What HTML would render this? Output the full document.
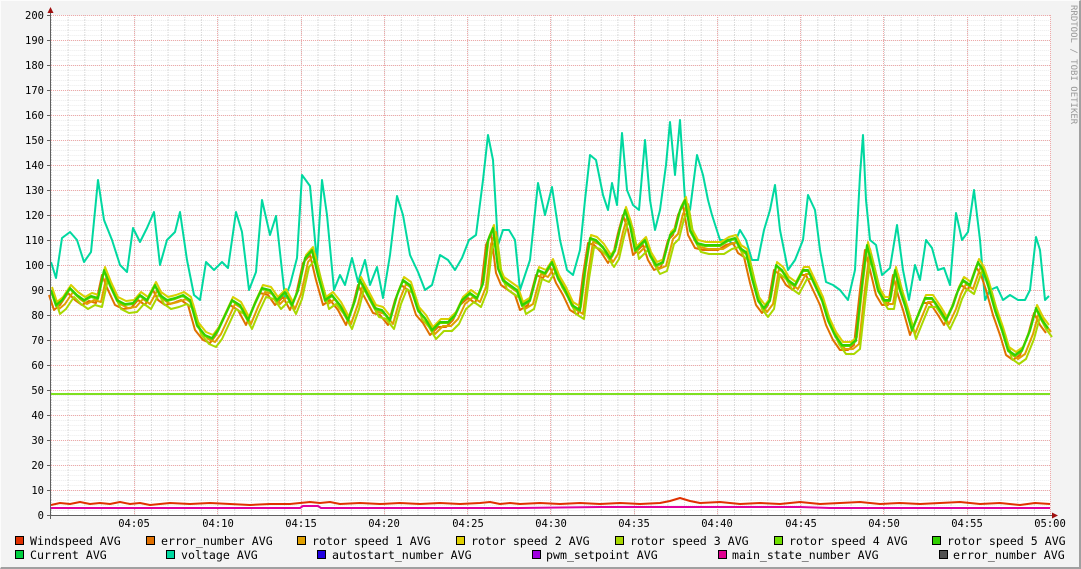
<!DOCTYPE html>
<html><head><meta charset="utf-8">
<style>
html,body{margin:0;padding:0;}
body{width:1081px;height:569px;background:#f3f3f3;overflow:hidden;position:relative;font-family:"DejaVu Sans Mono","Liberation Mono",monospace;}
.frame{position:absolute;left:0;top:0;width:1079px;height:567px;border-top:1px solid #fcfcfc;border-left:1px solid #fcfcfc;border-right:2px solid #a0a0a0;border-bottom:2px solid #a0a0a0;box-sizing:border-box;width:1081px;height:569px;}
svg{position:absolute;left:0;top:0;}
</style></head><body>
<div class="frame"></div>
<svg width="1081" height="569" xmlns="http://www.w3.org/2000/svg">
<defs>
<pattern id="minor" x="51" y="15" width="16.66" height="5" patternUnits="userSpaceOnUse">
<line x1="0" y1="0" x2="16.66" y2="0" stroke="#d8d8d8" stroke-width="1" stroke-dasharray="1,1"/>
<line x1="0.5" y1="0" x2="0.5" y2="5" stroke="#d8d8d8" stroke-width="1" stroke-dasharray="1,1"/>
</pattern>
</defs>
<rect x="51" y="15" width="999" height="500" fill="#fff"/>
<rect x="51" y="15" width="999" height="500" fill="url(#minor)"/>
<g stroke="#f0a8a8" stroke-width="1" stroke-dasharray="1,1">
<line x1="51" y1="15.5" x2="1050" y2="15.5"/><line x1="51" y1="40.5" x2="1050" y2="40.5"/><line x1="51" y1="65.5" x2="1050" y2="65.5"/><line x1="51" y1="90.5" x2="1050" y2="90.5"/><line x1="51" y1="115.5" x2="1050" y2="115.5"/><line x1="51" y1="140.5" x2="1050" y2="140.5"/><line x1="51" y1="165.5" x2="1050" y2="165.5"/><line x1="51" y1="190.5" x2="1050" y2="190.5"/><line x1="51" y1="215.5" x2="1050" y2="215.5"/><line x1="51" y1="240.5" x2="1050" y2="240.5"/><line x1="51" y1="265.5" x2="1050" y2="265.5"/><line x1="51" y1="290.5" x2="1050" y2="290.5"/><line x1="51" y1="315.5" x2="1050" y2="315.5"/><line x1="51" y1="340.5" x2="1050" y2="340.5"/><line x1="51" y1="365.5" x2="1050" y2="365.5"/><line x1="51" y1="390.5" x2="1050" y2="390.5"/><line x1="51" y1="415.5" x2="1050" y2="415.5"/><line x1="51" y1="440.5" x2="1050" y2="440.5"/><line x1="51" y1="465.5" x2="1050" y2="465.5"/><line x1="51" y1="490.5" x2="1050" y2="490.5"/>
<line x1="134.5" y1="15" x2="134.5" y2="515"/><line x1="217.5" y1="15" x2="217.5" y2="515"/><line x1="301.5" y1="15" x2="301.5" y2="515"/><line x1="384.5" y1="15" x2="384.5" y2="515"/><line x1="467.5" y1="15" x2="467.5" y2="515"/><line x1="550.5" y1="15" x2="550.5" y2="515"/><line x1="634.5" y1="15" x2="634.5" y2="515"/><line x1="717.5" y1="15" x2="717.5" y2="515"/><line x1="800.5" y1="15" x2="800.5" y2="515"/><line x1="883.5" y1="15" x2="883.5" y2="515"/><line x1="967.5" y1="15" x2="967.5" y2="515"/><line x1="1050.5" y1="15" x2="1050.5" y2="515"/>
</g>
<g fill="none" stroke-width="2" stroke-linejoin="round">
<polyline stroke="#80e020" points="51,394 1050,394"/>
<polyline stroke="#e000a0" points="51,508 300,508 303,506 318,506 321,508 330,508 520,508 600,507 800,507 830,508 1050,508"/>
<polyline stroke="#e03000" points="51,505 60,503 70,504 80,502 90,504 100,503 110,504 120,502 130,504 140,503 150,505 170,503 190,504 210,503 230,504 250,505 270,504 290,504 300,503 310,502 320,503 330,502 340,504 360,503 380,504 400,503 420,504 440,503 460,504 480,503 490,502 500,504 510,503 520,504 540,503 560,504 580,503 600,504 620,503 640,504 660,503 670,501 680,498 690,501 700,503 720,502 740,504 760,503 780,504 800,502 820,504 840,503 860,502 880,504 900,503 920,504 940,503 960,502 980,504 1000,503 1020,505 1035,503 1050,504"/>
<polyline stroke="#00d8a0" points="51,262 56,278 62,238 70,232 77,240 84,262 91,252 98,180 104,220 112,240 120,265 127,272 133,228 140,242 147,228 154,212 160,265 167,240 175,232 180,212 187,260 194,295 200,300 206,262 214,270 222,262 228,268 236,212 242,232 249,290 256,272 262,200 270,235 276,216 285,298 290,285 297,258 302,175 310,186 317,262 322,180 327,215 334,290 340,275 345,285 352,258 358,282 365,260 370,285 377,267 383,298 390,255 397,196 403,215 410,255 418,272 425,290 432,285 440,255 448,260 455,270 462,258 469,240 476,235 483,180 488,135 493,160 498,245 503,230 509,230 515,240 520,290 530,260 538,183 545,215 552,187 560,240 567,270 573,275 580,250 585,200 590,155 596,160 603,195 608,210 612,183 617,205 622,133 627,190 633,205 639,210 645,140 650,200 655,230 660,210 666,165 670,122 675,175 680,120 685,200 690,210 697,155 703,175 708,200 712,215 720,240 728,240 734,245 740,230 746,240 752,260 758,260 764,230 770,210 775,185 780,230 788,270 795,260 803,240 808,195 815,210 820,250 826,282 833,285 840,290 848,300 855,270 860,175 863,135 866,200 870,240 876,245 882,275 890,268 897,225 903,270 909,300 915,265 920,280 926,240 932,248 938,270 944,268 950,285 956,213 962,240 968,232 974,190 980,240 985,300 990,290 997,287 1003,300 1010,295 1018,300 1025,300 1030,290 1036,237 1040,250 1045,300 1049,296"/>
<g id="rot">
<polyline stroke="#e07000" transform="translate(-2,5)" points="51,290 56,305 62,300 70,288 77,295 84,300 91,296 98,298 104,270 110,285 117,300 125,304 133,303 140,295 147,300 155,285 160,295 167,300 175,298 183,295 190,300 197,325 205,335 212,338 218,330 225,315 232,300 240,305 248,320 255,303 262,288 270,290 277,300 285,292 292,305 298,290 305,258 312,250 318,275 325,300 332,295 340,305 348,320 355,300 360,280 368,295 375,308 382,310 390,320 397,295 403,280 410,285 418,310 425,318 432,330 440,322 448,322 455,315 462,300 470,293 477,298 483,283 488,240 493,228 498,268 503,280 510,285 517,290 522,305 530,300 538,270 545,273 552,262 558,278 565,290 572,305 580,310 585,270 590,238 596,240 603,247 610,258 615,250 620,228 625,210 630,225 635,250 640,245 645,240 650,255 656,265 663,262 670,235 675,230 680,210 685,200 690,230 697,243 705,245 712,245 720,245 728,240 735,238 740,248 746,252 752,278 758,300 764,308 770,300 776,265 782,270 788,280 795,285 803,270 808,270 815,285 822,300 828,320 835,335 842,345 850,345 856,340 862,285 867,245 872,265 878,290 884,300 890,300 895,270 900,290 905,305 912,330 918,315 925,298 932,298 940,310 946,320 953,305 958,290 963,280 970,285 978,262 983,270 988,285 995,310 1002,330 1008,350 1015,355 1022,350 1030,330 1036,308 1042,320 1048,328"/>
</g>
<polyline stroke="#e0a000" transform="translate(3,4)" points="51,290 56,305 62,300 70,288 77,295 84,300 91,296 98,298 104,270 110,285 117,300 125,304 133,303 140,295 147,300 155,285 160,295 167,300 175,298 183,295 190,300 197,325 205,335 212,338 218,330 225,315 232,300 240,305 248,320 255,303 262,288 270,290 277,300 285,292 292,305 298,290 305,258 312,250 318,275 325,300 332,295 340,305 348,320 355,300 360,280 368,295 375,308 382,310 390,320 397,295 403,280 410,285 418,310 425,318 432,330 440,322 448,322 455,315 462,300 470,293 477,298 483,283 488,240 493,228 498,268 503,280 510,285 517,290 522,305 530,300 538,270 545,273 552,262 558,278 565,290 572,305 580,310 585,270 590,238 596,240 603,247 610,258 615,250 620,228 625,210 630,225 635,250 640,245 645,240 650,255 656,265 663,262 670,235 675,230 680,210 685,200 690,230 697,243 705,245 712,245 720,245 728,240 735,238 740,248 746,252 752,278 758,300 764,308 770,300 776,265 782,270 788,280 795,285 803,270 808,270 815,285 822,300 828,320 835,335 842,345 850,345 856,340 862,285 867,245 872,265 878,290 884,300 890,300 895,270 900,290 905,305 912,330 918,315 925,298 932,298 940,310 946,320 953,305 958,290 963,280 970,285 978,262 983,270 988,285 995,310 1002,330 1008,350 1015,355 1022,350 1030,330 1036,308 1042,320 1048,328"/>
<polyline stroke="#d8d000" transform="translate(1,-3)" points="51,290 56,305 62,300 70,288 77,295 84,300 91,296 98,298 104,270 110,285 117,300 125,304 133,303 140,295 147,300 155,285 160,295 167,300 175,298 183,295 190,300 197,325 205,335 212,338 218,330 225,315 232,300 240,305 248,320 255,303 262,288 270,290 277,300 285,292 292,305 298,290 305,258 312,250 318,275 325,300 332,295 340,305 348,320 355,300 360,280 368,295 375,308 382,310 390,320 397,295 403,280 410,285 418,310 425,318 432,330 440,322 448,322 455,315 462,300 470,293 477,298 483,283 488,240 493,228 498,268 503,280 510,285 517,290 522,305 530,300 538,270 545,273 552,262 558,278 565,290 572,305 580,310 585,270 590,238 596,240 603,247 610,258 615,250 620,228 625,210 630,225 635,250 640,245 645,240 650,255 656,265 663,262 670,235 675,230 680,210 685,200 690,230 697,243 705,245 712,245 720,245 728,240 735,238 740,248 746,252 752,278 758,300 764,308 770,300 776,265 782,270 788,280 795,285 803,270 808,270 815,285 822,300 828,320 835,335 842,345 850,345 856,340 862,285 867,245 872,265 878,290 884,300 890,300 895,270 900,290 905,305 912,330 918,315 925,298 932,298 940,310 946,320 953,305 958,290 963,280 970,285 978,262 983,270 988,285 995,310 1002,330 1008,350 1015,355 1022,350 1030,330 1036,308 1042,320 1048,328"/>
<polyline stroke="#a8d800" transform="translate(4,9)" points="51,290 56,305 62,300 70,288 77,295 84,300 91,296 98,298 104,270 110,285 117,300 125,304 133,303 140,295 147,300 155,285 160,295 167,300 175,298 183,295 190,300 197,325 205,335 212,338 218,330 225,315 232,300 240,305 248,320 255,303 262,288 270,290 277,300 285,292 292,305 298,290 305,258 312,250 318,275 325,300 332,295 340,305 348,320 355,300 360,280 368,295 375,308 382,310 390,320 397,295 403,280 410,285 418,310 425,318 432,330 440,322 448,322 455,315 462,300 470,293 477,298 483,283 488,240 493,228 498,268 503,280 510,285 517,290 522,305 530,300 538,270 545,273 552,262 558,278 565,290 572,305 580,310 585,270 590,238 596,240 603,247 610,258 615,250 620,228 625,210 630,225 635,250 640,245 645,240 650,255 656,265 663,262 670,235 675,230 680,210 685,200 690,230 697,243 705,245 712,245 720,245 728,240 735,238 740,248 746,252 752,278 758,300 764,308 770,300 776,265 782,270 788,280 795,285 803,270 808,270 815,285 822,300 828,320 835,335 842,345 850,345 856,340 862,285 867,245 872,265 878,290 884,300 890,300 895,270 900,290 905,305 912,330 918,315 925,298 932,298 940,310 946,320 953,305 958,290 963,280 970,285 978,262 983,270 988,285 995,310 1002,330 1008,350 1015,355 1022,350 1030,330 1036,308 1042,320 1048,328"/>
<polyline stroke="#60d800" transform="translate(0,1)" points="51,290 56,305 62,300 70,288 77,295 84,300 91,296 98,298 104,270 110,285 117,300 125,304 133,303 140,295 147,300 155,285 160,295 167,300 175,298 183,295 190,300 197,325 205,335 212,338 218,330 225,315 232,300 240,305 248,320 255,303 262,288 270,290 277,300 285,292 292,305 298,290 305,258 312,250 318,275 325,300 332,295 340,305 348,320 355,300 360,280 368,295 375,308 382,310 390,320 397,295 403,280 410,285 418,310 425,318 432,330 440,322 448,322 455,315 462,300 470,293 477,298 483,283 488,240 493,228 498,268 503,280 510,285 517,290 522,305 530,300 538,270 545,273 552,262 558,278 565,290 572,305 580,310 585,270 590,238 596,240 603,247 610,258 615,250 620,228 625,210 630,225 635,250 640,245 645,240 650,255 656,265 663,262 670,235 675,230 680,210 685,200 690,230 697,243 705,245 712,245 720,245 728,240 735,238 740,248 746,252 752,278 758,300 764,308 770,300 776,265 782,270 788,280 795,285 803,270 808,270 815,285 822,300 828,320 835,335 842,345 850,345 856,340 862,285 867,245 872,265 878,290 884,300 890,300 895,270 900,290 905,305 912,330 918,315 925,298 932,298 940,310 946,320 953,305 958,290 963,280 970,285 978,262 983,270 988,285 995,310 1002,330 1008,350 1015,355 1022,350 1030,330 1036,308 1042,320 1048,328"/>
<polyline stroke="#30d000" points="51,290 56,305 62,300 70,288 77,295 84,300 91,296 98,298 104,270 110,285 117,300 125,304 133,303 140,295 147,300 155,285 160,295 167,300 175,298 183,295 190,300 197,325 205,335 212,338 218,330 225,315 232,300 240,305 248,320 255,303 262,288 270,290 277,300 285,292 292,305 298,290 305,258 312,250 318,275 325,300 332,295 340,305 348,320 355,300 360,280 368,295 375,308 382,310 390,320 397,295 403,280 410,285 418,310 425,318 432,330 440,322 448,322 455,315 462,300 470,293 477,298 483,283 488,240 493,228 498,268 503,280 510,285 517,290 522,305 530,300 538,270 545,273 552,262 558,278 565,290 572,305 580,310 585,270 590,238 596,240 603,247 610,258 615,250 620,228 625,210 630,225 635,250 640,245 645,240 650,255 656,265 663,262 670,235 675,230 680,210 685,200 690,230 697,243 705,245 712,245 720,245 728,240 735,238 740,248 746,252 752,278 758,300 764,308 770,300 776,265 782,270 788,280 795,285 803,270 808,270 815,285 822,300 828,320 835,335 842,345 850,345 856,340 862,285 867,245 872,265 878,290 884,300 890,300 895,270 900,290 905,305 912,330 918,315 925,298 932,298 940,310 946,320 953,305 958,290 963,280 970,285 978,262 983,270 988,285 995,310 1002,330 1008,350 1015,355 1022,350 1030,330 1036,308 1042,320 1048,328"/>
</g>
<!-- axes -->
<line x1="50.5" y1="12" x2="50.5" y2="519" stroke="#606060" stroke-width="1"/>
<line x1="47" y1="515.5" x2="1054" y2="515.5" stroke="#606060" stroke-width="1"/>
<polygon points="47.5,13 53.5,13 50.5,7" fill="#a01010"/>
<polygon points="1052,512.5 1052,518.5 1058,515.5" fill="#a01010"/>
<g stroke="#606060" stroke-width="1">
<line x1="47" y1="15.5" x2="50" y2="15.5"/><line x1="47" y1="40.5" x2="50" y2="40.5"/><line x1="47" y1="65.5" x2="50" y2="65.5"/><line x1="47" y1="90.5" x2="50" y2="90.5"/><line x1="47" y1="115.5" x2="50" y2="115.5"/><line x1="47" y1="140.5" x2="50" y2="140.5"/><line x1="47" y1="165.5" x2="50" y2="165.5"/><line x1="47" y1="190.5" x2="50" y2="190.5"/><line x1="47" y1="215.5" x2="50" y2="215.5"/><line x1="47" y1="240.5" x2="50" y2="240.5"/><line x1="47" y1="265.5" x2="50" y2="265.5"/><line x1="47" y1="290.5" x2="50" y2="290.5"/><line x1="47" y1="315.5" x2="50" y2="315.5"/><line x1="47" y1="340.5" x2="50" y2="340.5"/><line x1="47" y1="365.5" x2="50" y2="365.5"/><line x1="47" y1="390.5" x2="50" y2="390.5"/><line x1="47" y1="415.5" x2="50" y2="415.5"/><line x1="47" y1="440.5" x2="50" y2="440.5"/><line x1="47" y1="465.5" x2="50" y2="465.5"/><line x1="47" y1="490.5" x2="50" y2="490.5"/>
</g>
<g font-family="DejaVu Sans Mono, Liberation Mono, monospace" font-size="10.5" fill="#000" text-anchor="end">
<text x="44" y="19">200</text><text x="44" y="44">190</text><text x="44" y="69">180</text><text x="44" y="94">170</text><text x="44" y="119">160</text><text x="44" y="144">150</text><text x="44" y="169">140</text><text x="44" y="194">130</text><text x="44" y="219">120</text><text x="44" y="244">110</text><text x="44" y="269">100</text><text x="44" y="294">90</text><text x="44" y="319">80</text><text x="44" y="344">70</text><text x="44" y="369">60</text><text x="44" y="394">50</text><text x="44" y="419">40</text><text x="44" y="444">30</text><text x="44" y="469">20</text><text x="44" y="494">10</text><text x="44" y="519">0</text>
</g>
<g font-family="DejaVu Sans Mono, Liberation Mono, monospace" font-size="10.5" fill="#000" text-anchor="middle">
<text x="134" y="527">04:05</text><text x="218" y="527">04:10</text><text x="301" y="527">04:15</text><text x="384" y="527">04:20</text><text x="468" y="527">04:25</text><text x="551" y="527">04:30</text><text x="634" y="527">04:35</text><text x="717" y="527">04:40</text><text x="801" y="527">04:45</text><text x="884" y="527">04:50</text><text x="967" y="527">04:55</text><text x="1050" y="527">05:00</text>
</g>
<text transform="translate(1071,5) rotate(90)" font-family="DejaVu Sans Mono, monospace" font-size="9" fill="#999">RRDTOOL / TOBI OETIKER</text>
<g stroke="#000" stroke-width="1">
<rect x="15.5" y="536.5" width="8" height="8" fill="#e03000"/>
<rect x="146.5" y="536.5" width="8" height="8" fill="#e07000"/>
<rect x="297.5" y="536.5" width="8" height="8" fill="#e0a000"/>
<rect x="456.5" y="536.5" width="8" height="8" fill="#e0d000"/>
<rect x="615.5" y="536.5" width="8" height="8" fill="#a8d800"/>
<rect x="774.5" y="536.5" width="8" height="8" fill="#70e000"/>
<rect x="932.5" y="536.5" width="8" height="8" fill="#30d000"/>
<rect x="15.5" y="550.5" width="8" height="8" fill="#00d040"/>
<rect x="166.5" y="550.5" width="8" height="8" fill="#00d8a0"/>
<rect x="317.5" y="550.5" width="8" height="8" fill="#2000e0"/>
<rect x="532.5" y="550.5" width="8" height="8" fill="#a000e0"/>
<rect x="718.5" y="550.5" width="8" height="8" fill="#e00090"/>
<rect x="939.5" y="550.5" width="8" height="8" fill="#505050"/>
</g>
<g font-family="DejaVu Sans Mono, Liberation Mono, monospace" font-size="11.6" fill="#000" xml:space="preserve">
<text x="30" y="545">Windspeed AVG</text>
<text x="161" y="545">error_number AVG</text>
<text x="312" y="545">rotor speed 1 AVG</text>
<text x="471" y="545">rotor speed 2 AVG</text>
<text x="630" y="545">rotor speed 3 AVG</text>
<text x="789" y="545">rotor speed 4 AVG</text>
<text x="947" y="545">rotor speed 5 AVG</text>
<text x="30" y="559">Current AVG</text>
<text x="181" y="559">voltage AVG</text>
<text x="332" y="559">autostart_number AVG</text>
<text x="546" y="559">pwm_setpoint AVG</text>
<text x="732" y="559">main_state_number AVG</text>
<text x="953" y="559">error_number AVG</text>
</g>
</svg>
</body></html>
